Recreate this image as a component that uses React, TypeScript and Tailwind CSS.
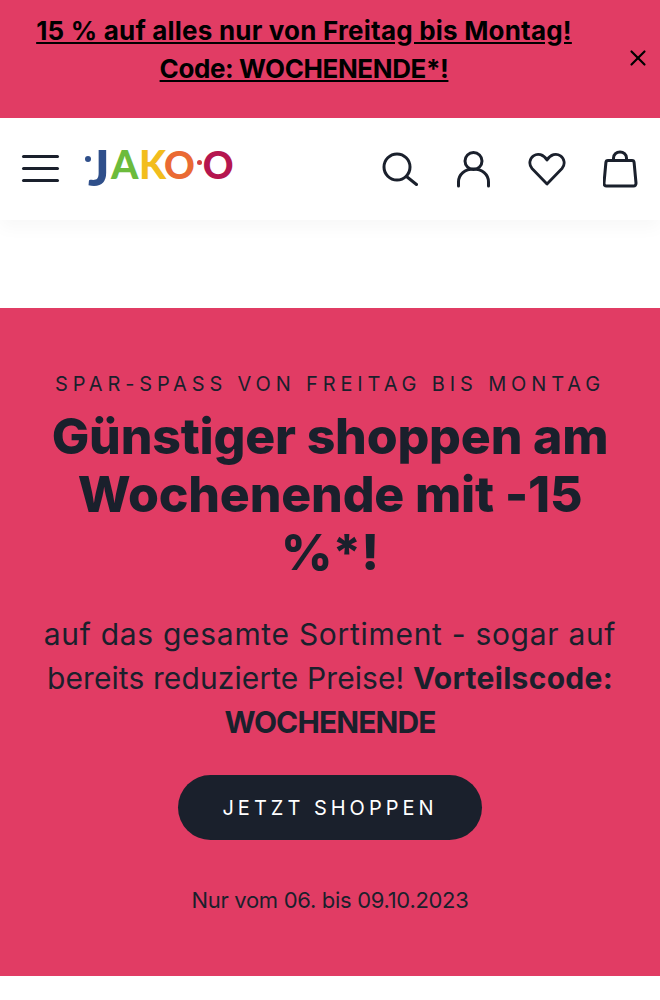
import { X } from 'lucide-react'

const FONT = "font-['Inter','Liberation_Sans',sans-serif]"

function Logo() {
  return (
    <div className="flex items-start h-[44px] w-[150px] font-['Lato',sans-serif] font-black leading-none select-none">
      <span className="mt-[9px] w-[6px] h-[6px] rounded-full bg-[#2f4f8a] shrink-0" />
      <span className="text-[#2f4f8a] text-[50px] -ml-[3px] -mt-[5px] w-[23px]">J</span>
      <span className="text-[#6cbb3c] text-[39px] -mt-[2px] w-[28px]">A</span>
      <span className="text-[#f2bd1d] text-[39px] -mt-[2px] w-[25px]">K</span>
      <span className="text-[#ea6a33] text-[38px] -mt-[2px]">O</span>
      <span className="mt-[13px] ml-[2px] mr-[1px] w-[5px] h-[5px] rounded-full bg-[#d4423f] shrink-0" />
      <span className="text-[#b5164f] text-[38px] -mt-[2px]">O</span>
    </div>
  )
}

function IconSearch() {
  return (
    <svg width="36" height="34" viewBox="0 0 36 34" fill="none" stroke="#1a202c" strokeWidth="3" strokeLinecap="round">
      <circle cx="15" cy="15" r="13" />
      <path d="M24.500 24.500L34.500 32.500" />
    </svg>
  )
}

function IconPerson() {
  return (
    <svg width="36" height="38" viewBox="0 0 36 38" fill="none" stroke="#1a202c" strokeWidth="3" strokeLinecap="round">
      <circle cx="18.500" cy="11" r="8.500" />
      <path d="M3.500 36v-4c0-7.500 6.500-13 15-13s15 5.500 15 13v4" />
    </svg>
  )
}

function IconHeart() {
  return (
    <svg width="38" height="34" viewBox="0 0 38 34" fill="none" stroke="#1a202c" strokeWidth="2.800" strokeLinejoin="round">
      <path d="M19 32L4 16.500C0.500 12.500 1.500 6.500 5.500 3.800 9.500 1 15.500 2 19 8c3.500-6 9.500-7 13.500-4.200 4 2.700 5 8.700 1.500 12.700L19 32z" />
    </svg>
  )
}

function IconBag() {
  return (
    <svg width="36" height="38" viewBox="0 0 36 38" fill="none" stroke="#1a202c" strokeWidth="3" strokeLinejoin="round" strokeLinecap="round">
      <path d="M5 10.500h24c1.200 0 2 .8 2.100 2L33 33c.1 1.800-.9 3-2.500 3h-27C1.900 36 .9 34.800 1 33l1.900-20.500c.1-1.200.9-2 2.100-2z" />
      <path d="M10.500 10.500V8c0-3.500 3-6 6.500-6s6.500 2.500 6.500 6v2.500" />
    </svg>
  )
}

export default function App() {
  return (
    <div className={`${FONT} bg-white min-h-[1000px] w-[660px] overflow-hidden`}>
      {/* Aktionsleiste */}
      <div className="relative h-[118px] bg-[#e13c64] pt-[12px] pr-[52px]">
        <p className="text-center text-[26px] leading-[38px] font-bold text-black underline tracking-[0.2px] whitespace-nowrap">
          15 % auf alles nur von Freitag bis Montag!
          <br />
          <span className="tracking-[-0.4px]">Code: WOCHENENDE*!</span>
        </p>
        <button className="absolute right-[9px] top-[45px] text-black">
          <X size={26} strokeWidth={2} />
        </button>
      </div>

      {/* Header */}
      <header className="h-[102px] bg-white flex items-center justify-between pl-[22px] pr-[21px] shadow-[0_8px_16px_rgba(0,0,0,0.03)]">
        <div className="flex items-center gap-[26px]">
          <div className="flex flex-col gap-[9px] w-[37px] -mt-[2px]">
            <span className="h-[3px] rounded-full bg-[#1a202c]" />
            <span className="h-[3px] rounded-full bg-[#1a202c]" />
            <span className="h-[3px] rounded-full bg-[#1a202c]" />
          </div>
          <Logo />
        </div>
        <div className="flex items-center gap-[37px]">
          <IconSearch />
          <IconPerson />
          <IconHeart />
          <IconBag />
        </div>
      </header>

      <div className="h-[88px]" />

      {/* Hero */}
      <section className="h-[668px] bg-[#e13c64] flex flex-col items-center pt-[63px] text-[#1a202c] text-center">
        <p className="text-[20px] leading-[26px] tracking-[4.850px] whitespace-nowrap">SPAR-SPASS VON FREITAG BIS MONTAG</p>
        <h1 className="mt-[10px] text-[50px] leading-[58px] font-extrabold tracking-[-0.2px] px-[40px]">
          Günstiger shoppen am Wochenende mit -15 %*!
        </h1>
        <p className="mt-[31px] text-[30px] leading-[44px] tracking-[0.7px] whitespace-nowrap">
          auf das gesamte Sortiment - sogar auf
          <br />
          <span className="tracking-[0.1px]">bereits reduzierte Preise! </span>
          <strong className="font-bold tracking-[0.3px]">Vorteilscode:</strong>
          <br />
          <strong className="font-bold tracking-[-0.9px]">WOCHENENDE</strong>
        </p>
        <button className="mt-[31px] w-[304px] h-[65px] rounded-full bg-[#1a202c] text-white text-[20px] tracking-[4px]">
          JETZT SHOPPEN
        </button>
        <p className="mt-[45px] text-[22px] leading-[30px] tracking-[-0.3px]">Nur vom 06. bis 09.10.2023</p>
      </section>
    </div>
  )
}
